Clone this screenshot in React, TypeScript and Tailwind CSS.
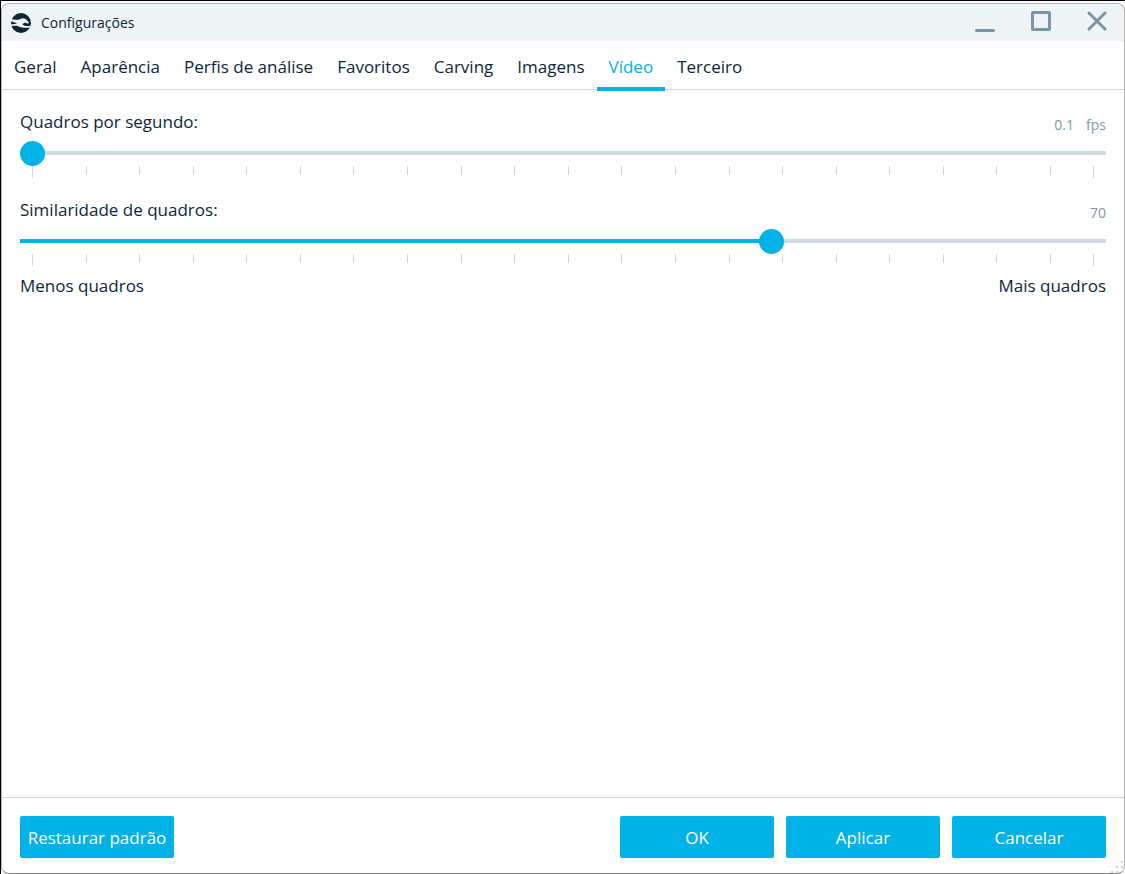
import { useState } from "react";
import { clsx } from "clsx";

const TABS = [
  "Geral",
  "Aparência",
  "Perfis de análise",
  "Favoritos",
  "Carving",
  "Imagens",
  "Vídeo",
  "Terceiro",
];

const MIN = 1;
const MAX = 100;
const TICK_STEP = 5;

// width of every gap between two ticks; the last gap is the remainder
const TICK_GAPS: number[] = [];
for (let at = MIN; at < MAX; at += TICK_STEP) {
  TICK_GAPS.push(Math.min(TICK_STEP, MAX - at));
}

function Logo() {
  return (
    <svg viewBox="0 0 20 20" className="h-5 w-5" aria-hidden="true">
      <circle cx="10" cy="10" r="10" fill="#0b2739" />
      <path
        d="M-1 5.8 C3 7.2 6 7 9 6.2 C11 5.2 13.4 5 15 6.2 L17.6 9 C18 10 17.6 10.6 16.6 10.4 L14.4 9.8 C13.2 9.8 12.2 10.4 11.4 11.4 C13.6 13.2 16.4 13.4 20 12.8 L19 14.4 C14.6 15.4 10.6 14.6 7.6 13.4 C5 12.6 2.4 12.8 -0.4 13.4 L-1 11.8 C1.6 11 4 10.8 6 10.4 C4 9.4 1 8.6 -1 8.4 Z"
        fill="#eff4f7"
      />
    </svg>
  );
}

function TitleBar() {
  return (
    <header className="flex h-[37px] items-center rounded-t-lg bg-[#eff4f7] pl-[9px]">
      <Logo />
      <h1 className="ml-[10px] text-sm text-[#0b2739]">Configurações</h1>
      <div className="ml-auto flex h-full items-start gap-9 pt-[7px] pr-[17px] text-[#7896a4]">
        <button type="button" aria-label="Minimizar">
          <svg viewBox="0 0 20 20" className="h-5 w-5 overflow-visible">
            <path d="M1.5 19.5h17" stroke="currentColor" strokeWidth="3" strokeLinecap="round" />
          </svg>
        </button>
        <button type="button" aria-label="Maximizar">
          <svg viewBox="0 0 20 20" className="h-5 w-5">
            <rect x="1.5" y="1.5" width="17" height="17" rx="0.5" fill="none" stroke="currentColor" strokeWidth="3" />
          </svg>
        </button>
        <button type="button" aria-label="Fechar">
          <svg viewBox="0 0 20 20" className="h-5 w-5">
            <path d="M2 2l16 16M18 2L2 18" stroke="currentColor" strokeWidth="3" strokeLinecap="round" />
          </svg>
        </button>
      </div>
    </header>
  );
}

function Ticks() {
  return (
    <div className="mx-3 flex h-3" aria-hidden="true">
      {TICK_GAPS.map((gap, i) => (
        <div
          key={i}
          className={clsx("basis-0 border-l border-[#cddbe1]", i === 0 ? "h-3" : "h-[9px]")}
          style={{ flexGrow: gap }}
        />
      ))}
      <div className="h-3 w-px bg-[#cddbe1]" />
    </div>
  );
}

type SliderProps = {
  id: string;
  label: string;
  initial: number;
  format: (value: number) => string;
  unit?: string;
};

function Slider({ id, label, initial, format, unit }: SliderProps) {
  const [value, setValue] = useState(initial);
  const filled = ((value - MIN) / (MAX - MIN)) * 100;

  return (
    <div>
      <div className="flex h-6 items-end justify-between">
        <label htmlFor={id}>{label}</label>
        <output htmlFor={id} className="flex gap-3 text-sm leading-[18px] text-[#7f98a4]">
          <span>{format(value)}</span>
          {unit && <span>{unit}</span>}
        </output>
      </div>
      <input
        id={id}
        type="range"
        min={MIN}
        max={MAX}
        value={value}
        onChange={(e) => setValue(Number(e.target.value))}
        className="mt-[7px] block h-[25px] w-full cursor-pointer appearance-none bg-[length:100%_4px] bg-[position:0_10px] bg-no-repeat outline-none [&::-webkit-slider-thumb]:h-[25px] [&::-webkit-slider-thumb]:w-[25px] [&::-webkit-slider-thumb]:appearance-none [&::-webkit-slider-thumb]:rounded-full [&::-webkit-slider-thumb]:bg-[#00b2e5]"
        style={{
          backgroundImage: `linear-gradient(to right, #00b2e5 ${filled}%, #cddbe1 ${filled}%)`,
        }}
      />
      <Ticks />
    </div>
  );
}

function ActionButton({ children }: { children: string }) {
  return (
    <button type="button" className="h-[42px] w-[154px] rounded-xs bg-[#00b2e5] pt-px text-white">
      {children}
    </button>
  );
}

function ResizeGrip() {
  return (
    <svg viewBox="0 0 14 14" className="absolute right-0 bottom-0 h-[14px] w-[14px]" aria-hidden="true">
      {[
        [12, 3],
        [7, 8],
        [12, 8],
        [2, 13],
        [7, 13],
        [12, 13],
      ].map(([x, y]) => (
        <path key={`${x}-${y}`} d={`M${x - 1.5} ${y}h3M${x} ${y - 1.5}v3`} stroke="#c3d2da" />
      ))}
    </svg>
  );
}

export default function App() {
  const [active, setActive] = useState("Vídeo");

  return (
    <div className="flex min-h-screen flex-col border-t border-l border-black bg-white pt-[2px] font-['Open_Sans',sans-serif] text-[17px] leading-6 text-[#0b2739]">
      <div className="relative flex grow flex-col rounded-lg border border-[#b4b4b4] border-b-[#808080] bg-white">
        <TitleBar />

        <nav role="tablist" className="flex h-[49px] border-b border-[#cdd9df]">
          {TABS.map((tab) => (
            <button
              key={tab}
              type="button"
              role="tab"
              aria-selected={tab === active}
              onClick={() => setActive(tab)}
              className={clsx(
                "-mb-[2px] border-b-4 px-3 pt-[6px]",
                tab === active ? "border-[#00b2e5] text-[#00b2e5]" : "border-transparent",
              )}
            >
              {tab}
            </button>
          ))}
        </nav>

        <main className="grow px-[18px] pt-5">
          <div className="flex flex-col gap-5">
            <Slider
              id="fps"
              label="Quadros por segundo:"
              initial={1}
              format={(v) => (v / 10).toFixed(1)}
              unit="fps"
            />
            <Slider id="similarity" label="Similaridade de quadros:" initial={70} format={String} />
          </div>
          <div className="mt-2 flex justify-between">
            <span>Menos quadros</span>
            <span>Mais quadros</span>
          </div>
        </main>

        <footer className="flex gap-3 border-t border-[#cdd9df] px-[18px] pt-[18px] pb-[15px]">
          <ActionButton>Restaurar padrão</ActionButton>
          <div className="ml-auto flex gap-3">
            <ActionButton>OK</ActionButton>
            <ActionButton>Aplicar</ActionButton>
            <ActionButton>Cancelar</ActionButton>
          </div>
        </footer>

        <ResizeGrip />
      </div>
    </div>
  );
}
